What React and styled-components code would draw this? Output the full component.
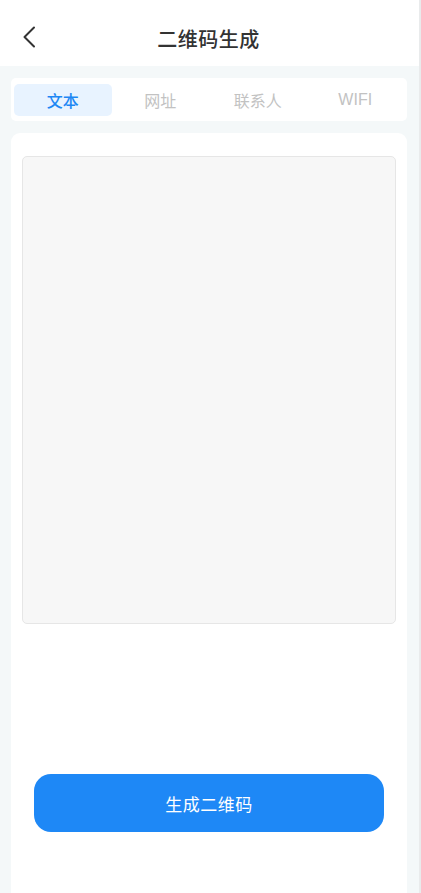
import React, { useState } from "react";
import styled, { createGlobalStyle } from "styled-components";

const GlobalStyle = createGlobalStyle`
  html, body {
    margin: 0;
    padding: 0;
    background: #f4f8f9;
  }
  body {
    font-family: "Noto Sans CJK SC", "Noto Sans", sans-serif;
  }
  * {
    box-sizing: border-box;
  }
`;

const tabs = ["文本", "网址", "联系人", "WIFI"];

export default function App() {
  const [active, setActive] = useState(0);
  const [text, setText] = useState("");

  return (
    <>
      <GlobalStyle />
      <Page>
        <Header>
          <BackButton aria-label="back">
            <svg width="14" height="22" viewBox="0 0 14 22" fill="none">
              <path
                d="M12 1.5L2.5 11L12 20.5"
                stroke="#333"
                strokeWidth="2"
                strokeLinecap="round"
                strokeLinejoin="round"
              />
            </svg>
          </BackButton>
          <Title>二维码生成</Title>
        </Header>

        <Body>
          <TabBar>
            {tabs.map((t, i) => (
              <Tab key={t} $active={i === active} onClick={() => setActive(i)}>
                {t}
              </Tab>
            ))}
          </TabBar>

          <Card>
            <TextInput value={text} onChange={(e) => setText(e.target.value)} />
            <Spacer />
            <GenerateButton>生成二维码</GenerateButton>
          </Card>
        </Body>
      </Page>
    </>
  );
}

const Page = styled.div`
  width: 100%;
  height: 893px;
  overflow: hidden;
  display: flex;
  flex-direction: column;
  border-right: 2px solid #e9ebec;
  background: #f4f8f9;
`;

const Header = styled.div`
  height: 66px;
  background: #fff;
  display: flex;
  align-items: center;
  justify-content: center;
  position: relative;
  flex-shrink: 0;
`;

const BackButton = styled.button`
  position: absolute;
  left: 22px;
  top: 26px;
  border: none;
  background: none;
  padding: 0;
  display: flex;
  cursor: pointer;
`;

const Title = styled.div`
  font-size: 20px;
  font-weight: 500;
  color: #333;
  margin-top: 10px;
  margin-left: -2px;
  letter-spacing: 0.5px;
`;

const Body = styled.div`
  flex: 1;
  display: flex;
  flex-direction: column;
  padding: 12px 12px 0 11px;
  gap: 12px;
`;

const TabBar = styled.div`
  height: 43px;
  background: #fff;
  border-radius: 5px;
  display: flex;
  align-items: center;
  padding: 0 3px;
  flex-shrink: 0;
`;

const Tab = styled.div`
  flex: 1;
  height: 32px;
  border-radius: 5px;
  display: flex;
  align-items: center;
  justify-content: center;
  font-size: 16px;
  font-weight: ${(p) => (p.$active ? 500 : 400)};
  font-family: "Liberation Sans", "Noto Sans CJK SC", sans-serif;
  color: ${(p) => (p.$active ? "#1d87f4" : "#c2c2c2")};
  background: ${(p) => (p.$active ? "#e8f3ff" : "transparent")};
  cursor: pointer;
`;

const Card = styled.div`
  flex: 1;
  background: #fff;
  border-radius: 9px 9px 0 0;
  display: flex;
  flex-direction: column;
  padding: 23px 11px 0 11px;
`;

const TextInput = styled.textarea`
  height: 468px;
  width: 100%;
  resize: none;
  background: #f7f7f7;
  border: 1px solid #e6e6e6;
  border-radius: 5px;
  outline: none;
  padding: 10px;
  font-family: inherit;
  font-size: 15px;
  color: #333;
`;

const Spacer = styled.div`
  height: 150px;
`;

const GenerateButton = styled.button`
  margin: 0 12px;
  height: 58px;
  border: none;
  border-radius: 17px;
  background: #1e88f6;
  color: #fff;
  font-size: 17px;
  font-weight: 400;
  font-family: "Noto Sans CJK SC", sans-serif;
  letter-spacing: 0.5px;
  cursor: pointer;
`;
